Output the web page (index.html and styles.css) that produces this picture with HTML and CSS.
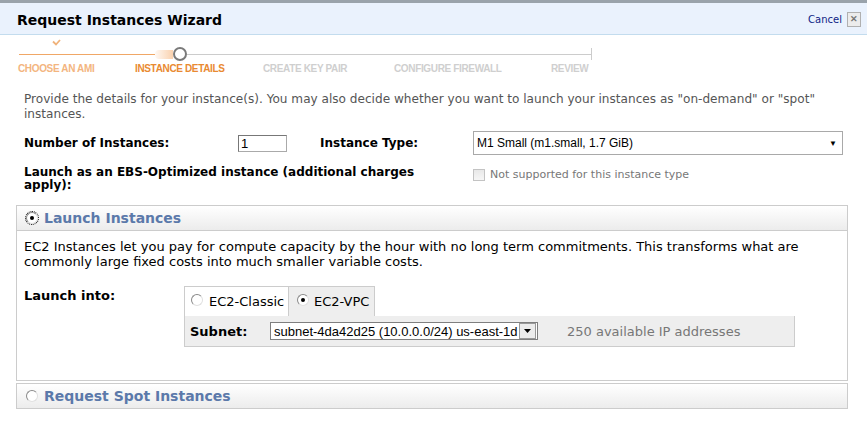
FILE: index.html
```html
<!DOCTYPE html>
<html>
<head>
<meta charset="utf-8">
<link rel="stylesheet" href="styles.css">
</head>
<body>
<div class="backdrop"></div>
<div class="header">
  <div class="title">Request Instances Wizard</div>
  <div class="cancel-wrap"><a class="cancel">Cancel</a><span class="close">&#x2715;</span></div>
</div>
<div class="steps">
  <div class="track">
    <span class="check"><svg width="9" height="7" viewBox="0 0 9 7"><path d="M1 2.5 L4 5.5 L8 1" fill="none" stroke="#f0b27a" stroke-width="1.8"/></svg></span>
    <div class="line-done"></div>
    <div class="glow"></div>
    <div class="dot"></div>
    <div class="line-todo"></div>
    <div class="tick"></div>
  </div>
  <div class="labels">
    <span class="lab done">CHOOSE AN AMI</span>
    <span class="lab cur">INSTANCE DETAILS</span>
    <span class="lab">CREATE KEY PAIR</span>
    <span class="lab">CONFIGURE FIREWALL</span>
    <span class="lab">REVIEW</span>
  </div>
</div>
<div class="content">
  <p class="desc">Provide the details for your instance(s). You may also decide whether you want to launch your instances as "on-demand" or "spot" instances.</p>
  <div class="row row1">
    <div class="lbl c1">Number of Instances:</div>
    <div class="c2"><span class="numbox">1</span></div>
    <div class="lbl c3">Instance Type:</div>
    <div class="c4"><div class="select-big"><span>M1 Small (m1.small, 1.7 GiB)</span><span class="caret">&#9660;</span></div></div>
  </div>
  <div class="row row2">
    <div class="lbl ebs">Launch as an EBS-Optimized instance (additional charges apply):</div>
    <div class="nots"><span class="cb"></span><span>Not supported for this instance type</span></div>
  </div>
</div>
<div class="panel">
  <div class="phead"><span class="radio checked focus"></span><span class="ptitle">Launch Instances</span></div>
  <div class="pbody">
    <p class="ptext">EC2 Instances let you pay for compute capacity by the hour with no long term commitments. This transforms what are commonly large fixed costs into much smaller variable costs.</p>
    <div class="launch">
      <div class="li">Launch into:</div>
      <div class="tabsbox">
        <div class="tabs">
          <div class="tab"><span class="radio"></span>EC2-Classic</div>
          <div class="tab sel"><span class="radio checked"></span>EC2-VPC</div>
        </div>
        <div class="tabpanel">
          <span class="sub">Subnet:</span>
          <span class="select-small"><span class="stext">subnet-4da42d25 (10.0.0.0/24) us-east-1d</span><span class="sbtn"><svg width="7" height="4" viewBox="0 0 7 4"><path d="M0 0 H7 L3.5 4 Z" fill="#000"/></svg></span></span>
          <span class="ips">250 available IP addresses</span>
        </div>
      </div>
    </div>
  </div>
</div>
<div class="panel panel2">
  <div class="phead"><span class="radio"></span><span class="ptitle">Request Spot Instances</span></div>
</div>
</body>
</html>
```
FILE: styles.css
```css
body {
  margin: 0;
  background: #fff;
  font-family: "DejaVu Sans", Verdana, sans-serif;
  font-size: 13px;
  color: #000;
  width: 867px;
  height: 426px;
  overflow: hidden;
}
.backdrop {
  height: 3px;
  background: #9aa3ab;
}
.header {
  height: 31px;
  background: #eaf2fd;
  border-bottom: 1px solid #c3dcee;
  display: flex;
  align-items: center;
  justify-content: space-between;
  padding: 0 6px 0 17px;
}
.title {
  font-weight: bold;
  font-size: 14px;
  margin-top: 2px;
}
.cancel-wrap {
  display: flex;
  align-items: center;
  gap: 5px;
  margin-top: 2px;
}
.cancel {
  color: #101f85;
  font-size: 10px;
}
.close {
  width: 12px;
  height: 13px;
  border: 1px solid #b0b0b0;
  background: #ececec;
  color: #777;
  font-size: 9px;
  line-height: 13px;
  text-align: center;
  font-family: "Liberation Sans", sans-serif;
  font-weight: bold;
}
.steps {
  padding: 0 0 0 18px;
}
.track {
  position: relative;
  height: 22px;
  display: flex;
  align-items: center;
  margin-top: 4px;
}
.check {
  position: absolute;
  left: 34px;
  top: 0px;
  line-height: 0;
}
.line-done {
  margin-left: 1px;
  width: 136px;
  height: 1px;
  background: #f0a766;
  margin-top: 8px;
}
.glow {
  width: 18px;
  height: 9px;
  margin-top: 8px;
  background: linear-gradient(to right, rgba(248,190,140,0.1), rgba(248,190,140,0.7));
  border-radius: 4px 0 0 4px;
}
.dot {
  width: 10px;
  height: 10px;
  border: 2px solid #7a7a7a;
  border-radius: 50%;
  background: #fff;
  margin-top: 8px;
}
.line-todo {
  width: 404px;
  height: 1px;
  background: #cccccc;
  margin-top: 8px;
}
.tick {
  width: 1px;
  height: 12px;
  background: #cccccc;
  margin-top: 8px;
}
.labels {
  display: grid;
  grid-template-columns: 117px 128px 131px 157px auto;
  font-family: "Liberation Sans", Arial, sans-serif;
  font-weight: bold;
  font-size: 10px;
  letter-spacing: -0.35px;
  color: #cfcfcf;
  margin-top: 2px;
}
.lab.done { color: #f3b57f; }
.lab.cur { color: #e98a32; }
.content {
  padding: 0 24px;
}
.desc {
  margin: 18px 0 0;
  color: #555;
  font-size: 12.1px;
  line-height: 15px;
}
.row {
  display: flex;
  align-items: center;
}
.lbl {
  font-weight: bold;
  font-size: 12px;
}
.row1 {
  margin-top: 9px;
  height: 24px;
}
.c1 { width: 214px; }
.c2 { width: 82px; }
.c3 { width: 153px; }
.c4 { flex: 1; }
.numbox {
  display: block;
  width: 45px;
  height: 15px;
  border: 1px solid #aaa;
  border-top-color: #777;
  border-left-color: #777;
  font-family: "Liberation Sans", Arial, sans-serif;
  font-size: 13px;
  line-height: 15px;
  padding-left: 2px;
}
.select-big {
  height: 22px;
  border: 1px solid #a9a9a9;
  display: flex;
  align-items: center;
  justify-content: space-between;
  padding: 0 5px 0 3px;
  font-family: "Liberation Sans", Arial, sans-serif;
  font-size: 12px;
}
.caret {
  font-size: 8px;
}
.row2 {
  margin-top: 11px;
  align-items: flex-start;
}
.ebs {
  width: 400px;
  line-height: 13px;
}
.nots {
  display: flex;
  align-items: center;
  gap: 5px;
  color: #777;
  font-size: 11px;
  margin-left: 49px;
  margin-top: 2px;
}
.cb {
  width: 10px;
  height: 10px;
  border: 1px solid #c3c3c3;
  background: linear-gradient(#e8e8e8, #f6f6f6);
}
.panel {
  margin: 13px 19px 0 16px;
  border: 1px solid #cccccc;
}
.panel2 {
  margin-top: 2px;
}
.phead {
  height: 24px;
  background: linear-gradient(#ffffff, #ececec);
  display: flex;
  align-items: center;
  padding-left: 9px;
  gap: 6px;
}
.pbody {
  border-top: 1px solid #cccccc;
  height: 149px;
  padding: 0 7px;
}
.ptitle {
  font-weight: bold;
  font-size: 14px;
  color: #5b79aa;
}
.radio {
  width: 10px;
  height: 10px;
  border-radius: 50%;
  border: 1px solid #8a8a8a;
  border-right-color: #e0e0e0;
  border-bottom-color: #e0e0e0;
  background: #fff;
  position: relative;
  display: inline-block;
  flex: none;
}
.radio.checked::after {
  content: "";
  position: absolute;
  left: 3px;
  top: 3px;
  width: 4px;
  height: 4px;
  border-radius: 50%;
  background: #000;
}
.radio.focus {
  outline: 1px dotted #000;
  outline-offset: 0px;
}
.ptext {
  margin: 8px 0 0;
  line-height: 15px;
}
.launch {
  display: flex;
  margin-top: 17px;
}
.li {
  width: 160px;
  margin-top: 2px;
  font-weight: bold;
}
.tabsbox {
  display: flex;
  flex-direction: column;
}
.tabs {
  display: flex;
  height: 30px;
}
.tab {
  display: flex;
  align-items: center;
  gap: 6px;
  padding: 0 0 0 6px;
  border: 1px solid #cccccc;
  border-bottom: none;
  background: #fff;
  white-space: nowrap;
  box-sizing: border-box;
}
.tab:first-child { width: 105px; }
.tab.sel {
  background: #eeeeee;
  border-left: none;
  width: 86px;
  padding-left: 8px;
  gap: 5px;
}
.tab .radio { margin-top: -4px; }
.tabpanel {
  width: 604px;
  height: 30px;
  background: #eeeeee;
  border: 1px solid #cccccc;
  border-top: none;
  display: flex;
  align-items: center;
  padding-left: 5px;
}
.sub { width: 80px; font-weight: bold; }
.select-small {
  display: flex;
  align-items: center;
  height: 16px;
  border: 1px solid #7f7f7f;
  background: #fff;
  font-family: "Liberation Sans", Arial, sans-serif;
  font-size: 13px;
}
.stext {
  padding: 0 3px;
  width: 242px;
  white-space: nowrap;
  overflow: hidden;
}
.sbtn {
  width: 15px;
  height: 14px;
  border: 1px solid #999;
  background: #ececec;
  display: flex;
  align-items: center;
  justify-content: center;
  margin-right: 1px;
}
.ips {
  margin-left: 29px;
  color: #777;
}
```
